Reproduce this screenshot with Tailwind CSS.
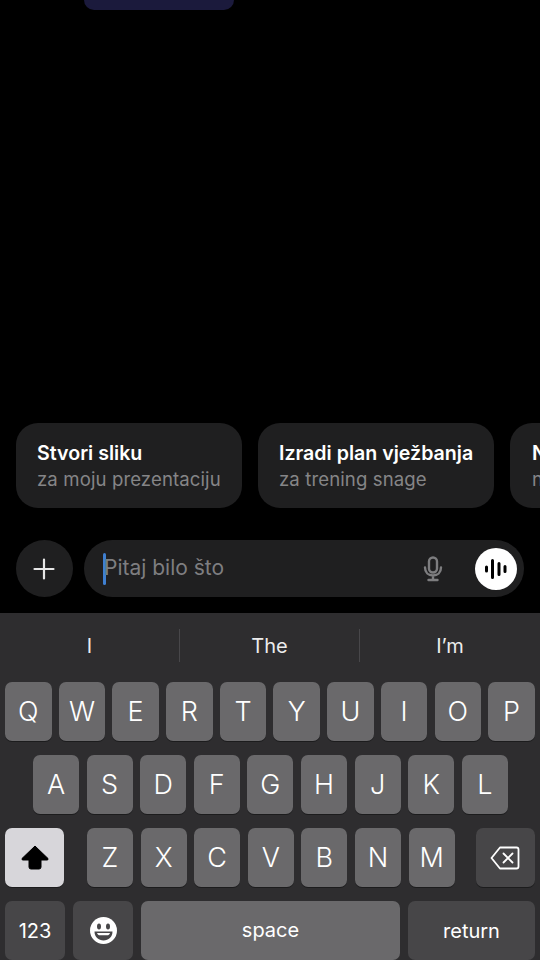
<!DOCTYPE html>
<html>
<head>
<meta charset="utf-8">
<script src="https://cdn.jsdelivr.net/npm/@tailwindcss/browser@4"></script>
</head>
<body class="bg-black">
<div class="w-[540px] h-[960px] overflow-hidden bg-black flex flex-col font-['Inter',sans-serif] text-white">
  <div class="ml-[84px] w-[150px] h-[10px] shrink-0 rounded-b-[14px] bg-[#1b1a3c]"></div>

  <div class="mt-[413px] h-[85px] shrink-0 flex gap-4 pl-4 overflow-hidden">
    <div class="w-[226px] shrink-0 rounded-[22px] bg-[#1f1f20] pl-[21px] pt-[18px]">
      <div class="text-[19.6px] leading-[24px] font-semibold">Stvori sliku</div>
      <div class="text-[18.6px] leading-[28px] text-[#858587] tracking-[0.1px]">za moju prezentaciju</div>
    </div>
    <div class="w-[236px] shrink-0 rounded-[22px] bg-[#1f1f20] pl-[21px] pt-[18px]">
      <div class="text-[19.6px] leading-[24px] font-semibold whitespace-nowrap">Izradi plan vježbanja</div>
      <div class="text-[18.6px] leading-[28px] text-[#858587] tracking-[0.1px]">za trening snage</div>
    </div>
    <div class="w-[236px] shrink-0 rounded-[22px] bg-[#1f1f20] pl-[22px] pt-[18px]">
      <div class="text-[19.6px] leading-[24px] font-semibold whitespace-nowrap">Napiši tekst</div>
      <div class="text-[18.6px] leading-[28px] text-[#858587]">na temu</div>
    </div>
  </div>

  <div class="mt-[32px] h-[57px] shrink-0 flex items-center pl-4 gap-[11px]">
    <div class="w-[57px] h-[57px] rounded-full bg-[#1f1f20] flex items-center justify-center pr-[2px]">
      <svg width="22" height="22" viewBox="0 0 22 22" fill="none" stroke="#e6e6e6" stroke-width="2.2" stroke-linecap="round"><path d="M11 1.500v19M1.500 11h19"/></svg>
    </div>
    <div class="w-[440px] h-[57px] rounded-full bg-[#1f1f20] flex items-center pl-[19px] pr-[7px]">
      <div class="w-[3px] h-[32px] rounded-full bg-[#3f7fd0] shrink-0"></div>
      <div class="ml-[-2px] text-[21px] text-[#7e7e80] leading-[28px] mb-[1px]">Pitaj bilo što</div>
      <svg class="ml-auto mr-[32px]" width="20" height="26" viewBox="0 0 20 26" fill="none" stroke="#7d7d7f" stroke-width="2.4" stroke-linecap="round"><rect x="6" y="1.500" width="8" height="15" rx="4"/><path d="M2 11.500c0 5 3.500 8 8 8s8-3 8-8M10 19.500v4M5.500 24h9"/></svg>
      <div class="w-[42px] h-[42px] rounded-full bg-white flex items-center justify-center shrink-0">
        <svg width="24" height="22" viewBox="0 0 24 22" fill="none" stroke="#000" stroke-width="3" stroke-linecap="round"><path d="M2.500 9v4M8.500 2.500v17M15 5.500v11M21 8.500v5"/></svg>
      </div>
    </div>
  </div>

  <div class="mt-[16px] flex-1 bg-[#2e2d2f]">
    <div class="flex pt-[16px] h-[69px] text-[20px] text-[#ececec]">
      <div class="w-[180px] h-[33px] flex items-center justify-center border-r border-[#48474a]">I</div>
      <div class="w-[180px] h-[33px] flex items-center justify-center border-r border-[#48474a]">The</div>
      <div class="w-[180px] h-[33px] flex items-center justify-center">I’m</div>
    </div>

    <div class="flex flex-col gap-[14px] text-[27px] leading-none font-light">
      <div class="flex gap-[7.200px] pl-[5px] h-[59px]">
        <div class="w-[46.500px] rounded-[7px] bg-[#6a696b] shadow-[0_1px_0_#1c1c1d] flex items-center justify-center">Q</div>
        <div class="w-[46.500px] rounded-[7px] bg-[#6a696b] shadow-[0_1px_0_#1c1c1d] flex items-center justify-center">W</div>
        <div class="w-[46.500px] rounded-[7px] bg-[#6a696b] shadow-[0_1px_0_#1c1c1d] flex items-center justify-center">E</div>
        <div class="w-[46.500px] rounded-[7px] bg-[#6a696b] shadow-[0_1px_0_#1c1c1d] flex items-center justify-center">R</div>
        <div class="w-[46.500px] rounded-[7px] bg-[#6a696b] shadow-[0_1px_0_#1c1c1d] flex items-center justify-center">T</div>
        <div class="w-[46.500px] rounded-[7px] bg-[#6a696b] shadow-[0_1px_0_#1c1c1d] flex items-center justify-center">Y</div>
        <div class="w-[46.500px] rounded-[7px] bg-[#6a696b] shadow-[0_1px_0_#1c1c1d] flex items-center justify-center">U</div>
        <div class="w-[46.500px] rounded-[7px] bg-[#6a696b] shadow-[0_1px_0_#1c1c1d] flex items-center justify-center">I</div>
        <div class="w-[46.500px] rounded-[7px] bg-[#6a696b] shadow-[0_1px_0_#1c1c1d] flex items-center justify-center">O</div>
        <div class="w-[46.500px] rounded-[7px] bg-[#6a696b] shadow-[0_1px_0_#1c1c1d] flex items-center justify-center">P</div>
      </div>
      <div class="flex gap-[7.600px] pl-[33px] h-[59px]">
        <div class="w-[46px] rounded-[7px] bg-[#6a696b] shadow-[0_1px_0_#1c1c1d] flex items-center justify-center">A</div>
        <div class="w-[46px] rounded-[7px] bg-[#6a696b] shadow-[0_1px_0_#1c1c1d] flex items-center justify-center">S</div>
        <div class="w-[46px] rounded-[7px] bg-[#6a696b] shadow-[0_1px_0_#1c1c1d] flex items-center justify-center">D</div>
        <div class="w-[46px] rounded-[7px] bg-[#6a696b] shadow-[0_1px_0_#1c1c1d] flex items-center justify-center">F</div>
        <div class="w-[46px] rounded-[7px] bg-[#6a696b] shadow-[0_1px_0_#1c1c1d] flex items-center justify-center">G</div>
        <div class="w-[46px] rounded-[7px] bg-[#6a696b] shadow-[0_1px_0_#1c1c1d] flex items-center justify-center">H</div>
        <div class="w-[46px] rounded-[7px] bg-[#6a696b] shadow-[0_1px_0_#1c1c1d] flex items-center justify-center">J</div>
        <div class="w-[46px] rounded-[7px] bg-[#6a696b] shadow-[0_1px_0_#1c1c1d] flex items-center justify-center">K</div>
        <div class="w-[46px] rounded-[7px] bg-[#6a696b] shadow-[0_1px_0_#1c1c1d] flex items-center justify-center">L</div>
      </div>
      <div class="flex gap-[7.600px] pl-[5px] h-[59px]">
        <div class="w-[59px] mr-[15.400px] rounded-[7px] bg-[#d7d6da] shadow-[0_1px_0_#1c1c1d] flex items-center justify-center">
          <svg width="28" height="25" viewBox="0 0 28 25" fill="#000"><path d="M14 1 L27 13.500 Q27.500 15 26 15 H20 V22 Q20 24 18 24 H10 Q8 24 8 22 V15 H2 Q0.500 15 1 13.500 Z" stroke="#000" stroke-width="1" stroke-linejoin="round"/></svg>
        </div>
        <div class="w-[46px] rounded-[7px] bg-[#6a696b] shadow-[0_1px_0_#1c1c1d] flex items-center justify-center">Z</div>
        <div class="w-[46px] rounded-[7px] bg-[#6a696b] shadow-[0_1px_0_#1c1c1d] flex items-center justify-center">X</div>
        <div class="w-[46px] rounded-[7px] bg-[#6a696b] shadow-[0_1px_0_#1c1c1d] flex items-center justify-center">C</div>
        <div class="w-[46px] rounded-[7px] bg-[#6a696b] shadow-[0_1px_0_#1c1c1d] flex items-center justify-center">V</div>
        <div class="w-[46px] rounded-[7px] bg-[#6a696b] shadow-[0_1px_0_#1c1c1d] flex items-center justify-center">B</div>
        <div class="w-[46px] rounded-[7px] bg-[#6a696b] shadow-[0_1px_0_#1c1c1d] flex items-center justify-center">N</div>
        <div class="w-[46px] rounded-[7px] bg-[#6a696b] shadow-[0_1px_0_#1c1c1d] flex items-center justify-center">M</div>
        <div class="w-[59px] ml-[13.600px] rounded-[7px] bg-[#474648] shadow-[0_1px_0_#1c1c1d] flex items-center justify-center">
          <svg width="30" height="24" viewBox="0 0 30 24" fill="none" stroke="#fff" stroke-width="1.800" stroke-linejoin="round" stroke-linecap="round"><path d="M10 1.500H26.500Q28.500 1.500 28.500 3.500V20.500Q28.500 22.500 26.500 22.500H10L1.500 12Z"/><path d="M13.500 7.500l9 9M22.500 7.500l-9 9"/></svg>
        </div>
      </div>
      <div class="flex gap-[8px] pl-[5px] h-[59px] text-[20px] font-normal">
        <div class="w-[60px] rounded-[7px] bg-[#474648] flex items-center justify-center">123</div>
        <div class="w-[60px] rounded-[7px] bg-[#474648] flex items-center justify-center">
          <svg width="27" height="27" viewBox="0 0 27 27"><circle cx="13.500" cy="13.500" r="13.500" fill="#fff"/><ellipse cx="9" cy="9.500" rx="2" ry="3" fill="#474648"/><ellipse cx="18" cy="9.500" rx="2" ry="3" fill="#474648"/><path d="M4.500 14.500H22.500C22.500 20 18.500 23.500 13.500 23.500S4.500 20 4.500 14.500Z" fill="#474648"/><path d="M7 16H20C19.500 17.500 18.500 18.300 17 18.300H10C8.500 18.300 7.500 17.500 7 16Z" fill="#fff"/></svg>
        </div>
        <div class="w-[259px] rounded-[7px] bg-[#6a696b] flex items-center justify-center pb-[2px]">space</div>
        <div class="w-[127px] rounded-[7px] bg-[#474648] flex items-center justify-center">return</div>
      </div>
    </div>
  </div>
</div>
</body>
</html>
